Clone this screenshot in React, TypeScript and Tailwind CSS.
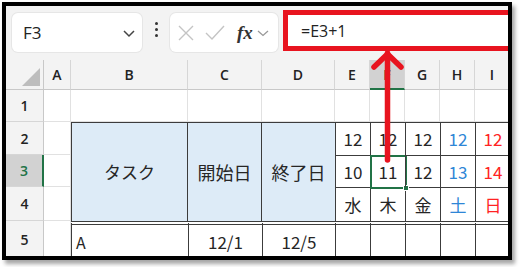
import React from "react";

const cols = ["A", "B", "C", "D", "E", "F", "G", "H", "I"];

const jp = "font-['Noto_Sans_CJK_JP','Noto_Sans',sans-serif]";
const hdr = "font-['Open_Sans','Noto_Sans',sans-serif] font-semibold text-[14px] text-[#222]";

const days = [
  { top: "12", mid: "10", day: "水", color: "text-[#262626]" },
  { top: "12", mid: "11", day: "木", color: "text-[#262626]" },
  { top: "12", mid: "12", day: "金", color: "text-[#262626]" },
  { top: "12", mid: "13", day: "土", color: "text-[#2e86d6]" },
  { top: "12", mid: "14", day: "日", color: "text-[#ff2323]" },
];

function ColHeader({ label, active }: { label: string; active?: boolean }) {
  return (
    <div
      className={`flex items-center justify-center border-r border-[#d6d6d6] border-b ${
        active ? "bg-[#d2d2d2] border-b-2 border-b-[#217346]" : "bg-[#f3f3f3] border-b-[#c8c8c8]"
      } ${hdr}`}
    >
      {label}
    </div>
  );
}

function RowHeader({ n, active }: { n: number; active?: boolean }) {
  return (
    <div
      className={`flex items-center justify-center border-b border-[#d6d6d6] border-r ${
        active ? "bg-[#d2d2d2] border-r-2 border-r-[#217346] text-[#217346]" : "bg-[#f3f3f3] border-r-[#c8c8c8]"
      } ${hdr}`}
    >
      {n}
    </div>
  );
}

export default function App() {
  return (
    <div className="w-[520px] h-[267px] bg-white overflow-hidden">
      <div className="relative ml-[2px] mt-[2px] w-[510px] h-[258px] border-4 border-black bg-[#f3f3f3] overflow-hidden shadow-[3px_4px_4px_rgba(0,0,0,0.35)]">
        {/* formula toolbar */}
        <div className="flex h-[54px] items-start">
          <div className="ml-[6px] mt-[7px] flex h-[39px] w-[130px] shrink-0 items-center justify-between rounded-[6px] bg-white pl-[11px] pr-[6px] shadow-[0_0_0_1px_#e6e6e6]">
            <span className="font-['Open_Sans','Noto_Sans',sans-serif] text-[17px] text-[#222]">F3</span>
            <svg width="14" height="10" viewBox="0 0 14 10">
              <path d="M2 3 L7 8 L12 3" fill="none" stroke="#444" strokeWidth="1.5" />
            </svg>
          </div>
          <div className="ml-[10px] mt-[16px] flex w-[8px] shrink-0 flex-col items-center gap-[3px]">
            <span className="h-[3px] w-[3px] rounded-full bg-[#333]" />
            <span className="h-[3px] w-[3px] rounded-full bg-[#333]" />
            <span className="h-[3px] w-[3px] rounded-full bg-[#333]" />
          </div>
          <div className="ml-[10px] mt-[7px] flex h-[39px] w-[108px] shrink-0 items-center rounded-[6px] bg-white pl-[7px] shadow-[0_0_0_1px_#e6e6e6]">
            <svg width="18" height="18" viewBox="0 0 18 18">
              <path d="M2 2 L16 16 M16 2 L2 16" stroke="#c4c4c4" strokeWidth="1.4" />
            </svg>
            <svg className="ml-[10px]" width="20" height="18" viewBox="0 0 20 18">
              <path d="M1 9 L7 15 L19 2" fill="none" stroke="#c4c4c4" strokeWidth="1.4" />
            </svg>
            <span className="ml-[12px] font-['Liberation_Serif',serif] text-[19px] font-bold italic leading-none text-[#333]">
              fx
            </span>
            <svg className="ml-[4px]" width="12" height="8" viewBox="0 0 12 8">
              <path d="M1 2 L6 6.5 L11 2" fill="none" stroke="#999" strokeWidth="1.3" />
            </svg>
          </div>
          <div className="ml-[5px] mt-[4px] flex h-[41px] w-[260px] shrink-0 items-center border-[5px] border-[#e8141f] bg-white pl-[13px]">
            <span className="font-['Open_Sans','Noto_Sans',sans-serif] text-[16px] text-[#222]">=E3+1</span>
          </div>
        </div>

        {/* sheet grid */}
        <div className="grid grid-cols-[38px_27px_117px_74px_73px_35px_35px_35px_35px_35px] grid-rows-[30px_32px_33px_32px_34px_37px] bg-white">
          {/* header row */}
          <div className="relative border-r border-b border-[#c8c8c8] bg-[#f3f3f3]">
            <div className="absolute bottom-[3px] right-[3px] h-0 w-0 [border-bottom:18px_solid_#bdbdbd] [border-left:18px_solid_transparent]" />
          </div>
          {cols.map((c) => (
            <ColHeader key={c} label={c} active={c === "F"} />
          ))}

          {/* row 1 */}
          <RowHeader n={1} />
          {cols.map((c) => (
            <div key={"r1" + c} className="border-r border-b border-[#e1e1e1]" />
          ))}

          {/* row 2 */}
          <RowHeader n={2} />
          <div className="border-r border-b border-[#e1e1e1]" />
          <div
            className={`row-span-3 flex items-center justify-center border-x-[1.5px] border-t-[1.5px] border-[#3c3c3c] bg-[#ddebf7] ${jp} text-[17px] text-[#262626]`}
          >
            タスク
          </div>
          <div
            className={`row-span-3 flex items-center justify-center border-r-[1.5px] border-t-[1.5px] border-[#3c3c3c] bg-[#ddebf7] ${jp} text-[18px] text-[#262626]`}
          >
            開始日
          </div>
          <div
            className={`row-span-3 flex items-center justify-center border-t-[1.5px] border-[#3c3c3c] bg-[#ddebf7] ${jp} text-[18px] text-[#262626]`}
          >
            終了日
          </div>
          {days.map((d, i) => (
            <div
              key={"r2" + i}
              className={`flex items-center justify-center border-l-[1.5px] border-t-[1.5px] border-[#3c3c3c] ${jp} text-[17px] ${d.color}`}
            >
              {d.top}
            </div>
          ))}

          {/* row 3 */}
          <RowHeader n={3} active />
          <div className="border-r border-b border-[#e1e1e1]" />
          {days.map((d, i) => (
            <div
              key={"r3" + i}
              className={`relative flex items-center justify-center border-l-[1.5px] border-t-[1.5px] border-[#3c3c3c] ${jp} text-[17px] ${d.color}`}
            >
              {d.mid}
              {i === 1 && (
                <>
                  <div className="absolute -inset-[1.5px] border-2 border-[#217346]" />
                  <div className="absolute -bottom-[4px] -right-[4px] h-[6px] w-[6px] border border-white bg-[#217346]" />
                </>
              )}
            </div>
          ))}

          {/* row 4 */}
          <RowHeader n={4} />
          <div className="border-r border-b border-[#e1e1e1]" />
          {days.map((d, i) => (
            <div
              key={"r4" + i}
              className={`flex items-center justify-center border-l-[1.5px] border-t-[1.5px] border-[#3c3c3c] ${jp} text-[17px] ${d.color}`}
            >
              {d.day}
            </div>
          ))}

          {/* row 5 */}
          <RowHeader n={5} />
          <div className="border-r border-[#e1e1e1]" />
          <div
            className={`flex items-center border-l-[1.5px] border-t-[4px] border-double border-[#3c3c3c] pl-[4px] ${jp} text-[16px] text-[#262626]`}
          >
            A
          </div>
          <div
            className={`flex items-center justify-center border-l-[1.5px] border-t-[4px] border-double border-[#3c3c3c] ${jp} text-[17px] text-[#262626]`}
          >
            12/1
          </div>
          <div
            className={`flex items-center justify-center border-l-[1.5px] border-t-[4px] border-double border-[#3c3c3c] ${jp} text-[17px] text-[#262626]`}
          >
            12/5
          </div>
          {days.map((_, i) => (
            <div key={"r5" + i} className="border-l-[1.5px] border-t-[4px] border-double border-[#3c3c3c]" />
          ))}
        </div>

        {/* red annotation arrow */}
        <svg className="pointer-events-none absolute left-0 top-0" width="510" height="258" viewBox="0 0 510 258">
          <path d="M381.5 47 L381.5 154" stroke="#e8141f" strokeWidth="5.5" strokeLinecap="round" />
          <path d="M368 61 L381.5 48 L395 61" fill="none" stroke="#e8141f" strokeWidth="5.5" strokeLinecap="round" strokeLinejoin="round" />
        </svg>
      </div>
    </div>
  );
}
